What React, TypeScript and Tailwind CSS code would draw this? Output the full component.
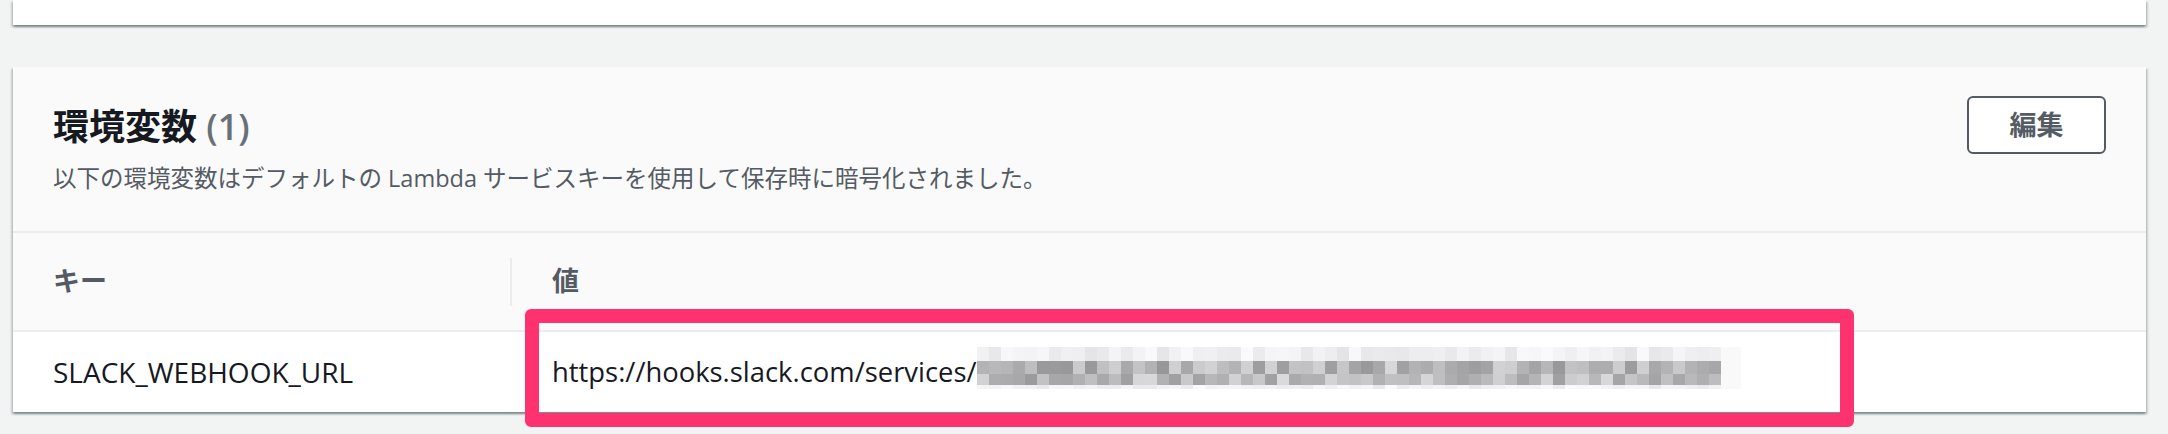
import React from "react";

// deterministic pseudo-random so the blurred secret looks the same every render
function rng(seed: number) {
  let a = seed;
  return () => {
    a |= 0;
    a = (a + 0x6d2b79f5) | 0;
    let t = Math.imul(a ^ (a >>> 15), 1 | a);
    t = (t + Math.imul(t ^ (t >>> 7), 61 | t)) ^ t;
    return ((t ^ (t >>> 14)) >>> 0) / 4294967296;
  };
}

const rows = [
  { h: 14, min: 228, max: 250 },
  { h: 13, min: 150, max: 215 },
  { h: 11, min: 155, max: 220 },
  { h: 4, min: 232, max: 250 },
];

function Mosaic() {
  const rand = rng(42);
  const cols = Array.from({ length: 62 }, () =>
    rows.map((r) => {
      const v = Math.round(r.min + rand() * (r.max - r.min));
      return `rgb(${v},${v},${v + 2})`;
    })
  );
  return (
    <div className="flex mb-[8px]">
      {cols.map((c, i) => (
        <div key={i} className="flex flex-col w-[12px]">
          {c.map((bg, j) => (
            <div key={j} style={{ height: rows[j].h, background: bg }} />
          ))}
        </div>
      ))}
      <div className="w-[20px] h-[42px] bg-[#f9f9f9]" />
    </div>
  );
}

const card =
  "bg-white shadow-[0_2px_2px_0_rgba(0,28,36,0.3),2px_2px_2px_0_rgba(0,28,36,0.15),-2px_2px_2px_0_rgba(0,28,36,0.15)]";

export default function App() {
  return (
    <div
      className="w-[2168px] h-[434px] bg-[#f2f3f3] pl-[13px] pr-[22px] flex flex-col gap-[42px] overflow-hidden"
      style={{ fontFamily: '"Open Sans", "Noto Sans CJK JP", sans-serif' }}
    >
      <div className={`${card} h-[25px]`} />

      <div className={card}>
        {/* header */}
        <div className="h-[166px] bg-[#fafafa] border-b-2 border-[#eaeded] pt-[29px] pl-[40px] pr-[40px] flex justify-between items-start">
          <div className="pt-[9px]">
            <h2 className="text-[36px] leading-[44px] font-bold text-[#16191f]">
              環境変数 <span className="font-semibold text-[#687078]">(1)</span>
            </h2>
            <p className="mt-[13px] text-[23.5px] leading-[32px] text-[#545b64]">
              以下の環境変数はデフォルトの Lambda サービスキーを使用して保存時に暗号化されました。
            </p>
          </div>
          <button className="w-[139px] h-[58px] border-2 border-[#545b64] rounded-[6px] bg-white text-[27px] font-bold text-[#545b64]">
            編集
          </button>
        </div>

        {/* table head */}
        <div className="grid grid-cols-[499px_1fr] h-[99px] bg-[#fafafa] border-b-2 border-[#eaeded]">
          <div className="flex items-center justify-between pl-[40px]">
            <span className="text-[27px] font-bold text-[#545b64]">キー</span>
            <div className="w-[2px] h-[48px] bg-[#eaeded]" />
          </div>
          <div className="flex items-center pl-[40px]">
            <span className="text-[27px] font-bold text-[#545b64]">値</span>
          </div>
        </div>

        {/* table row */}
        <div className="grid grid-cols-[499px_1fr] h-[80px] bg-white">
          <div className="flex items-center pl-[40px] text-[28px] text-[#16191f]">
            SLACK_WEBHOOK_URL
          </div>
          <div className="relative flex items-center pl-[40px] text-[27.4px] text-[#16191f]">
            <span>https://hooks.slack.com/services/</span>
            <Mosaic />
            {/* annotation frame */}
            <div className="absolute left-[13px] top-[-23px] w-[1329px] h-[118px] border-[14px] border-[#ff3270] rounded-[6px]" />
          </div>
        </div>
      </div>
    </div>
  );
}
